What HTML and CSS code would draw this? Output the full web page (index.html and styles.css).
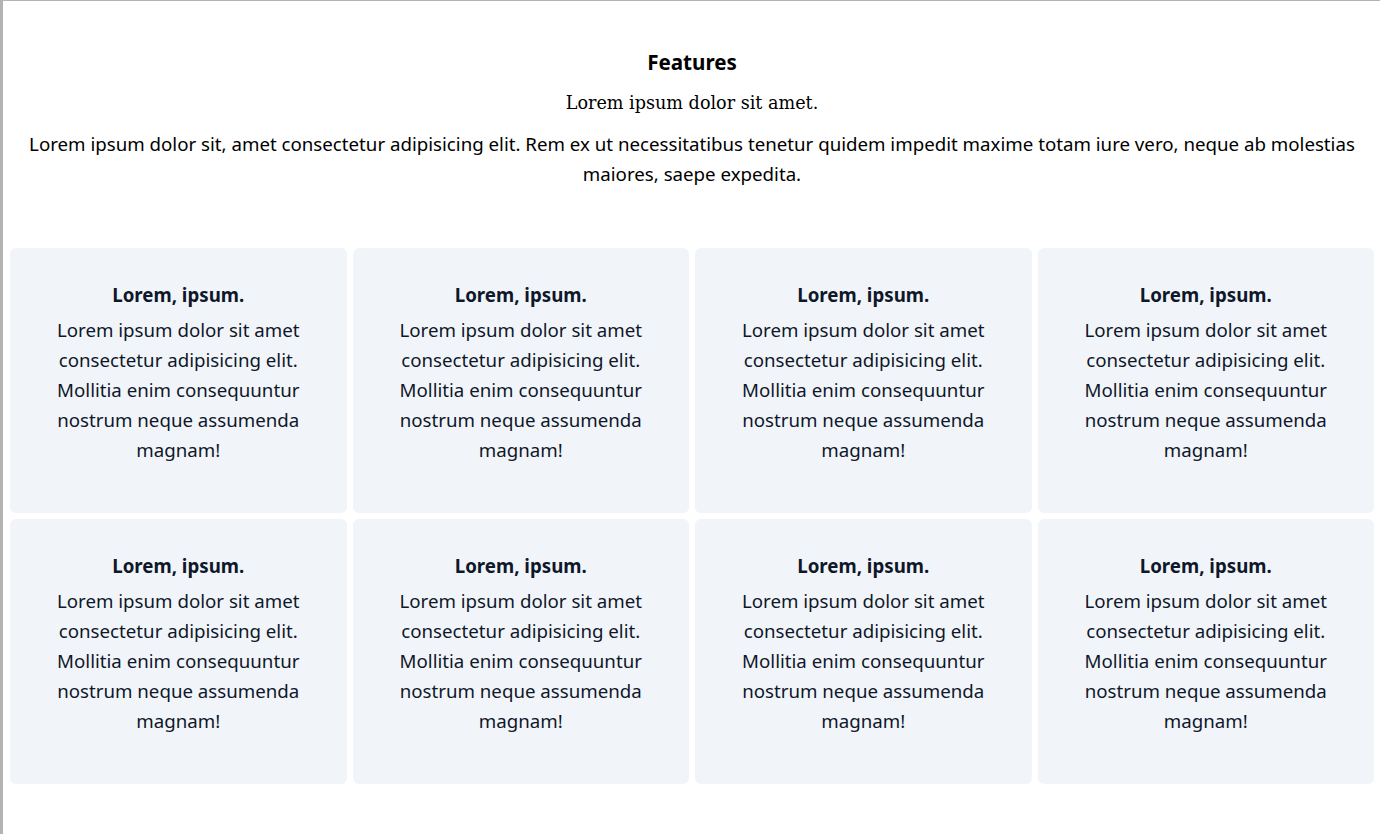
FILE: index.html
```html
<!DOCTYPE html>
<html lang="en">
<head>
<meta charset="utf-8">
<title>Features</title>
<link rel="stylesheet" href="styles.css">
</head>
<body>
<main class="page">
  <header class="intro">
    <h1 class="intro-title">Features</h1>
    <h2 class="intro-sub">Lorem ipsum dolor sit amet.</h2>
    <p class="intro-text">Lorem ipsum dolor sit, amet consectetur adipisicing elit. Rem ex ut necessitatibus tenetur quidem impedit maxime totam iure vero, neque ab molestias maiores, saepe expedita.</p>
  </header>
  <section class="grid">
    <article class="card"><h3 class="card-title">Lorem, ipsum.</h3><p class="card-text">Lorem ipsum dolor sit amet consectetur adipisicing elit. Mollitia enim consequuntur nostrum neque assumenda magnam!</p></article>
    <article class="card"><h3 class="card-title">Lorem, ipsum.</h3><p class="card-text">Lorem ipsum dolor sit amet consectetur adipisicing elit. Mollitia enim consequuntur nostrum neque assumenda magnam!</p></article>
    <article class="card"><h3 class="card-title">Lorem, ipsum.</h3><p class="card-text">Lorem ipsum dolor sit amet consectetur adipisicing elit. Mollitia enim consequuntur nostrum neque assumenda magnam!</p></article>
    <article class="card"><h3 class="card-title">Lorem, ipsum.</h3><p class="card-text">Lorem ipsum dolor sit amet consectetur adipisicing elit. Mollitia enim consequuntur nostrum neque assumenda magnam!</p></article>
    <article class="card"><h3 class="card-title">Lorem, ipsum.</h3><p class="card-text">Lorem ipsum dolor sit amet consectetur adipisicing elit. Mollitia enim consequuntur nostrum neque assumenda magnam!</p></article>
    <article class="card"><h3 class="card-title">Lorem, ipsum.</h3><p class="card-text">Lorem ipsum dolor sit amet consectetur adipisicing elit. Mollitia enim consequuntur nostrum neque assumenda magnam!</p></article>
    <article class="card"><h3 class="card-title">Lorem, ipsum.</h3><p class="card-text">Lorem ipsum dolor sit amet consectetur adipisicing elit. Mollitia enim consequuntur nostrum neque assumenda magnam!</p></article>
    <article class="card"><h3 class="card-title">Lorem, ipsum.</h3><p class="card-text">Lorem ipsum dolor sit amet consectetur adipisicing elit. Mollitia enim consequuntur nostrum neque assumenda magnam!</p></article>
  </section>
</main>
</body>
</html>
```

FILE: styles.css
```css
html, body {
  margin: 0;
  padding: 0;
  background: #ffffff;
}
body {
  border-top: 1px solid #b3b3b3;
  border-left: 3px solid #b3b3b3;
  min-height: 834px;
  box-sizing: border-box;
  font-family: "Noto Sans", "Open Sans", sans-serif;
  color: #000000;
}
.page {
  padding: 0 6px 0 7px;
}
.intro {
  text-align: center;
  padding-top: 47px;
}
.intro-title {
  margin: 0;
  font-size: 20.6px;
  line-height: 28px;
  font-weight: 700;
}
.intro-sub {
  margin: 14px 0 0;
  font-family: "DejaVu Serif", "Liberation Serif", serif;
  font-size: 17.6px;
  line-height: 26px;
  font-weight: 400;
}
.intro-text {
  margin: 13px 0 0;
  font-size: 18.7px;
  line-height: 30px;
  padding: 0 10px;
}
.grid {
  margin-top: 59px;
  display: grid;
  grid-template-columns: repeat(4, 1fr);
  gap: 6px;
}
.card {
  background: #f1f5f9;
  border-radius: 6px;
  padding: 33px 40px 48px;
  text-align: center;
  color: #0f172a;
}
.card-title {
  margin: 0;
  font-size: 18.7px;
  line-height: 28px;
  font-weight: 700;
}
.card-text {
  margin: 6px 0 0;
  font-size: 18.7px;
  line-height: 30px;
}
```
